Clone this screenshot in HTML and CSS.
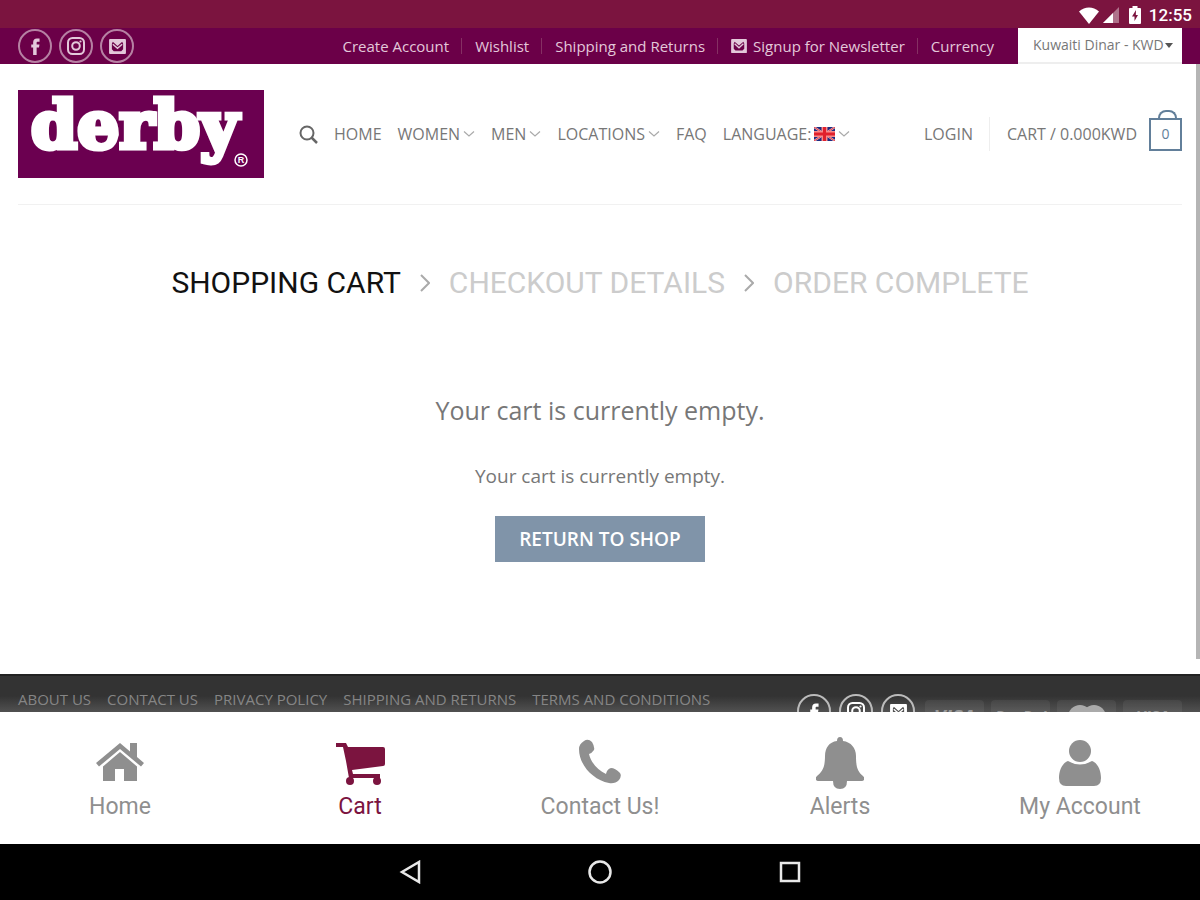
FILE: index.html
```html
<!DOCTYPE html>
<html lang="en">
<head>
    <meta charset="UTF-8">
    <meta name="viewport" content="width=device-width, initial-scale=1">
    <title>Derby - Shopping Cart</title>
    <link rel="stylesheet" href="styles.css">
</head>
<body>
    <!-- shared icons -->
    <svg class="sprite" aria-hidden="true">
        <symbol id="facebook" viewBox="0 0 18 18"><path d="M6.500 18V10H4.500V6.800H6.500V4.800C6.500 2 8 .5 10.500 .5H13.300V3.900H11.500C10.600 3.900 10.200 4.300 10.200 5V6.800H13.200L12.700 10H10.200V18Z" fill="currentColor"/></symbol>
        <symbol id="instagram" viewBox="0 0 18 18"><rect x="1" y="1" width="16" height="16" rx="4.500" fill="none" stroke="currentColor" stroke-width="2"/><circle cx="9" cy="9" r="3.800" fill="none" stroke="currentColor" stroke-width="2"/><circle cx="13.500" cy="4.500" r="1.100" fill="currentColor"/></symbol>
        <symbol id="mail" viewBox="0 0 18 16"><path d="M1 0h16q1 0 1 1v14q0 1-1 1H1q-1 0-1-1V1q0-1 1-1zM4 3L3 5v6l2 2h8l2-2V5l-1-2-5 4.500z" fill="currentColor" fill-rule="evenodd"/><path d="M4 5.500l5 4.500 5-4.500" fill="none" stroke="currentColor" stroke-width="1.500"/></symbol>
        <symbol id="down" viewBox="0 0 12 8"><path d="M1 1.500l5 4.500 5-4.500" fill="none" stroke="currentColor" stroke-width="1.200"/></symbol>
    </svg>

    <div class="statusbar">
        <svg width="20" height="17" viewBox="0 0 20 17"><path d="M0 4.500C6-1 14-1 20 4.500L10 17Z" fill="#fff"/></svg>
        <svg class="signal" width="16" height="16" viewBox="0 0 16 16"><path d="M0 16L16 0V16Z" fill="#fff" opacity=".4"/><path d="M0 16L10 6V16Z" fill="#fff"/></svg>
        <svg class="battery" width="12" height="18" viewBox="0 0 12 18"><path d="M3.500 0h5v2H11a1 1 0 0 1 1 1v14a1 1 0 0 1-1 1H1a1 1 0 0 1-1-1V3a1 1 0 0 1 1-1h2.500z" fill="#fff"/><path d="M7 4L3 10.500h2.500V15L9 9H6.800z" fill="#7b143f"/></svg>
        <span>12:55</span>
    </div>

    <div class="webview">
        <div class="topbar">
            <div class="social">
                <a href="#" aria-label="Facebook"><svg width="17" height="17"><use href="#facebook"/></svg></a>
                <a href="#" aria-label="Instagram"><svg width="18" height="18"><use href="#instagram"/></svg></a>
                <a href="#" aria-label="Email"><svg width="17" height="15"><use href="#mail"/></svg></a>
            </div>
            <nav class="top-links">
                <a href="#">Create Account</a>
                <a href="#">Wishlist</a>
                <a href="#">Shipping and Returns</a>
                <a href="#"><svg width="16" height="14"><use href="#mail"/></svg>Signup for Newsletter</a>
                <label for="currency">Currency</label>
            </nav>
            <div class="currency">
                <select id="currency">
                    <option>Kuwaiti Dinar - KWD</option>
                </select>
                <svg class="caret" width="8" height="5" viewBox="0 0 8 5"><path d="M0 0h8L4 5z" fill="#555"/></svg>
            </div>
        </div>

        <header class="header">
            <a class="logo" href="#" aria-label="derby">
                <svg width="246" height="88" viewBox="0 0 246 88">
                    <text class="logo-name" x="13" y="58">derby</text>
                    <circle cx="223" cy="70" r="6" fill="none" stroke="#fff" stroke-width="1.500"/>
                    <text class="logo-mark" x="223" y="73">R</text>
                </svg>
            </a>
            <nav class="main-nav">
                <a href="#" aria-label="Search"><svg width="19" height="19" viewBox="0 0 19 19"><circle cx="8" cy="8" r="6.500" fill="none" stroke="#666" stroke-width="2"/><path d="M12.500 12.500L18 18" stroke="#666" stroke-width="2.500"/></svg></a>
                <a href="#">HOME</a>
                <a href="#">WOMEN<svg class="chev" width="12" height="8"><use href="#down"/></svg></a>
                <a href="#">MEN<svg class="chev" width="12" height="8"><use href="#down"/></svg></a>
                <a href="#">LOCATIONS<svg class="chev" width="12" height="8"><use href="#down"/></svg></a>
                <a href="#">FAQ</a>
                <a href="#">LANGUAGE:
                    <svg class="flag" width="21" height="14" viewBox="0 0 21 14"><rect width="21" height="14" rx="1" fill="#1c2a80"/><path d="M0 0L21 14M21 0L0 14" stroke="#f4b4b8" stroke-width="2"/><path d="M0 0L21 14M21 0L0 14" stroke="#e0404c" stroke-width="1"/><path d="M10.500 0V14M0 7H21" stroke="#f78a8a" stroke-width="6"/><path d="M10.500 0V14M0 7H21" stroke="#e0202c" stroke-width="3"/></svg>
                    <svg class="chev" width="12" height="8"><use href="#down"/></svg></a>
            </nav>
            <div class="account">
                <a class="login" href="#">LOGIN</a>
                <a class="cart-link" href="#">CART / 0.000KWD <span class="bag">0</span></a>
            </div>
        </header>

        <main>
            <nav class="steps">
                <a class="current" href="#">SHOPPING CART</a>
                <svg width="10" height="18" viewBox="0 0 10 18"><path d="M1 1l8 8-8 8" fill="none" stroke="#aaa" stroke-width="2"/></svg>
                <a href="#">CHECKOUT DETAILS</a>
                <svg width="10" height="18" viewBox="0 0 10 18"><path d="M1 1l8 8-8 8" fill="none" stroke="#aaa" stroke-width="2"/></svg>
                <a href="#">ORDER COMPLETE</a>
            </nav>
            <div class="empty">
                <p class="lead">Your cart is currently empty.</p>
                <p>Your cart is currently empty.</p>
                <button type="button">RETURN TO SHOP</button>
            </div>
        </main>

        <footer>
            <nav class="footer-links">
                <a href="#">ABOUT US</a>
                <a href="#">CONTACT US</a>
                <a href="#">PRIVACY POLICY</a>
                <a href="#">SHIPPING AND RETURNS</a>
                <a href="#">TERMS AND CONDITIONS</a>
            </nav>
            <div class="footer-right">
                <div class="social">
                    <a href="#" aria-label="Facebook"><svg width="17" height="17"><use href="#facebook"/></svg></a>
                    <a href="#" aria-label="Instagram"><svg width="18" height="18"><use href="#instagram"/></svg></a>
                    <a href="#" aria-label="Email"><svg width="17" height="15"><use href="#mail"/></svg></a>
                </div>
                <div class="payments">
                    <span class="card">VISA</span>
                    <span class="card small">PayPal</span>
                    <span class="card circles"><svg width="38" height="24" viewBox="0 0 38 24"><circle cx="12" cy="12" r="12" fill="#aaa"/><circle cx="26" cy="12" r="12" fill="#aaa"/></svg></span>
                    <span class="card small">VISA</span>
                </div>
            </div>
        </footer>
        <div class="scrollbar"></div>
    </div>

    <nav class="tabs">
        <a href="#">
            <svg width="48" height="52" viewBox="0 0 48 52"><path d="M24 6L0 26l3 3.500L24 12l21 17.500 3-3.500-7-6V6h-7v8.500z" fill="currentColor"/><path d="M24 15L7 29.500V44h12V32h9v12h13V29.500z" fill="currentColor"/></svg>
            Home
        </a>
        <a class="active" href="#">
            <svg width="50" height="52" viewBox="0 0 50 52"><path d="M1 6h10l2 4h35q2 0 2 2v15q0 2-2 2l-31 4 1 4h27v4H14l-3-17-3-14H1z" fill="currentColor"/><circle cx="15" cy="44" r="4" fill="currentColor"/><circle cx="42" cy="44" r="4" fill="currentColor"/></svg>
            Cart
        </a>
        <a href="#">
            <svg width="42" height="52" viewBox="0 0 42 52"><path d="M5 4q4-3 8 1 3 5 2 8-2 3-5 4c2 9 9 16 17 20q1-5 5-6 4 0 9 5 2 3-1 7-4 4-10 3C14 43 0 28 0 12q0-5 5-8z" fill="currentColor"/></svg>
            Contact Us!
        </a>
        <a href="#">
            <svg width="48" height="52" viewBox="0 0 48 52"><path d="M24 0q3 0 3 4c8 1 13 7 13 15 0 12 2 16 7 20q2 2 1 4-1 1-2 1H2q-1 0-2-1-1-2 1-4c5-4 8-8 8-20C9 11 13 5 21 4q0-4 3-4z" fill="currentColor"/><path d="M17 44h14q0 8-7 8t-7-8z" fill="currentColor"/></svg>
            Alerts
        </a>
        <a href="#">
            <svg width="42" height="52" viewBox="0 0 42 52"><circle cx="21" cy="14" r="11" fill="currentColor"/><path d="M9 24q12 7 24 0c6 2 9 10 9 17q0 8-7 8H7q-7 0-7-8c0-7 3-15 9-17z" fill="currentColor"/></svg>
            My Account
        </a>
    </nav>

    <div class="navbar">
        <button type="button" aria-label="Back"><svg width="22" height="24" viewBox="0 0 22 24"><path d="M20 2V22L3 12Z" fill="none" stroke="#e8e8e8" stroke-width="2.500"/></svg></button>
        <button type="button" aria-label="Home"><svg width="24" height="24" viewBox="0 0 24 24"><circle cx="12" cy="12" r="10.500" fill="none" stroke="#e8e8e8" stroke-width="2.500"/></svg></button>
        <button type="button" aria-label="Recent apps"><svg width="24" height="24" viewBox="0 0 24 24"><rect x="3" y="3" width="18" height="18" fill="none" stroke="#e8e8e8" stroke-width="2.500"/></svg></button>
    </div>
</body>
</html>
```
FILE: styles.css
```css
* {
    box-sizing: border-box;
}
body {
    margin: 0;
    height: 100vh;
    display: flex;
    flex-direction: column;
    overflow: hidden;
    background: #fff;
    color: #777;
    font-family: "Open Sans", sans-serif;
    font-size: 15px;
}
a {
    color: inherit;
    text-decoration: none;
}
svg {
    flex: none;
}
.sprite {
    position: absolute;
    width: 0;
    height: 0;
}

/* Android status bar */
.statusbar {
    flex: none;
    height: 28px;
    padding: 2px 8px 0;
    display: flex;
    align-items: center;
    justify-content: flex-end;
    background: #7b143f;
    color: #fff;
    font: 500 17px Roboto, sans-serif;
}
.signal {
    margin-left: 4px;
}
.battery {
    margin: 0 8px 0 10px;
}

/* Page */
.webview {
    position: relative;
    flex: 1;
    min-height: 0;
    overflow: hidden;
    display: flex;
    flex-direction: column;
}
.topbar {
    flex: none;
    height: 36px;
    padding: 0 18px;
    display: flex;
    align-items: center;
    background: #6b0048;
    color: #e3c8da;
}
.social {
    display: flex;
    gap: 7px;
}
.social a {
    width: 34px;
    height: 34px;
    display: flex;
    align-items: center;
    justify-content: center;
    border: 2px solid #b681a3;
    border-radius: 50%;
}
.top-links {
    margin-left: auto;
    display: flex;
    align-items: center;
    font-weight: 500;
    line-height: 16px;
}
.top-links a {
    display: flex;
    align-items: center;
    gap: 6px;
    padding-right: 12px;
    margin-right: 13px;
    border-right: 1px solid #853063;
}
.currency {
    position: relative;
    align-self: stretch;
    width: 164px;
    margin-left: 24px;
}
.currency select {
    appearance: none;
    width: 100%;
    height: 100%;
    padding: 0 15px 2px;
    border: 0;
    border-bottom: 2px solid #eee;
    border-radius: 0;
    background: #fff;
    color: #777;
    font: 14px "Open Sans", sans-serif;
}
.caret {
    position: absolute;
    right: 9px;
    top: 15px;
}
.header {
    flex: none;
    margin: 0 18px;
    padding: 26px 0;
    display: flex;
    align-items: center;
    border-bottom: 1px solid #f1f1f1;
    color: #777;
    font-size: 16px;
    line-height: 20px;
}
.logo {
    display: flex;
    background: #6b0050;
}
.logo svg {
    overflow: visible;
}
.logo-name {
    font: bold 66px "DejaVu Serif", serif;
    fill: #fff;
    stroke: #fff;
    stroke-width: 5px;
}
.logo-mark {
    font: bold 9px "Liberation Sans", sans-serif;
    fill: #fff;
    text-anchor: middle;
}
.main-nav {
    margin-left: 35px;
    display: flex;
    align-items: center;
    gap: 16px;
}
.main-nav a {
    display: flex;
    align-items: center;
    gap: 3px;
}
.chev {
    color: #aaa;
}
.account {
    margin-left: auto;
    display: flex;
    align-items: center;
}
.login {
    padding: 7px 16px 7px 0;
    margin-right: 17px;
    border-right: 1px solid #eee;
}
.cart-link {
    display: flex;
    align-items: center;
    gap: 12px;
}
.bag {
    position: relative;
    width: 33px;
    height: 33px;
    border: 2px solid #627f9a;
    color: #627f9a;
    font-size: 14px;
    line-height: 28px;
    text-align: center;
}
.bag::before {
    content: "";
    position: absolute;
    left: 7px;
    bottom: 100%;
    width: 15px;
    height: 8px;
    border: 2px solid #627f9a;
    border-bottom: 0;
    border-radius: 8px 8px 0 0;
}
main {
    flex: 1;
}
.steps {
    margin-top: 58px;
    display: flex;
    align-items: center;
    justify-content: center;
    gap: 19px;
    color: #ccc;
    font: 30px/40px Roboto, sans-serif;
}
.steps .current {
    color: #111;
}
.empty {
    margin-top: 87px;
    text-align: center;
    font-size: 19px;
    line-height: 28px;
}
.empty p {
    margin: 0 0 26px;
}
.empty .lead {
    margin-bottom: 32px;
    font-size: 25px;
    line-height: 40px;
}
.empty button {
    height: 46px;
    padding: 0 24px;
    border: 0;
    background: #8094a9;
    color: #fff;
    font: 600 19px/44px "Open Sans", sans-serif;
}
footer {
    flex: none;
    height: 38px;
    padding: 18px 18px 0;
    display: flex;
    align-items: flex-start;
    justify-content: space-between;
    border-top: 2px solid #222;
    background: linear-gradient(#333 20px, #555 38px);
    color: #858585;
}
.footer-links {
    display: flex;
    gap: 16px;
    margin-top: -4px;
    font-weight: 500;
    line-height: 18px;
    white-space: nowrap;
}
.footer-right {
    display: flex;
    gap: 10px;
}
footer .social {
    color: #fff;
    gap: 8px;
}
footer .social a {
    border-color: #bbb;
}
.payments {
    display: flex;
    gap: 7px;
    padding-top: 6px;
}
.card {
    width: 59px;
    height: 36px;
    padding-top: 7px;
    border-radius: 4px;
    background: rgba(255, 255, 255, 0.06);
    color: #999;
    text-align: center;
    font: italic bold 20px/20px "Open Sans", sans-serif;
}
.card.small {
    font-size: 16px;
}
.card.circles {
    padding-top: 5px;
}
.scrollbar {
    position: absolute;
    top: 36px;
    right: 0;
    width: 4px;
    height: 87%;
    background: #b5b5b5;
}

/* App tabs */
.tabs {
    flex: none;
    height: 132px;
    padding: 25px 0 0;
    display: flex;
    background: #fff;
    color: #8f8f8f;
    font: 23px/36px Roboto, sans-serif;
}
.tabs a {
    flex: 1;
    display: flex;
    flex-direction: column;
    align-items: center;
}
.tabs .active {
    color: #7b143f;
}

/* Android navigation */
.navbar {
    flex: none;
    height: 56px;
    display: flex;
    align-items: center;
    justify-content: center;
    gap: 150px;
    background: #000;
}
.navbar button {
    display: flex;
    justify-content: center;
    width: 40px;
    padding: 0;
    border: 0;
    background: none;
}
```
